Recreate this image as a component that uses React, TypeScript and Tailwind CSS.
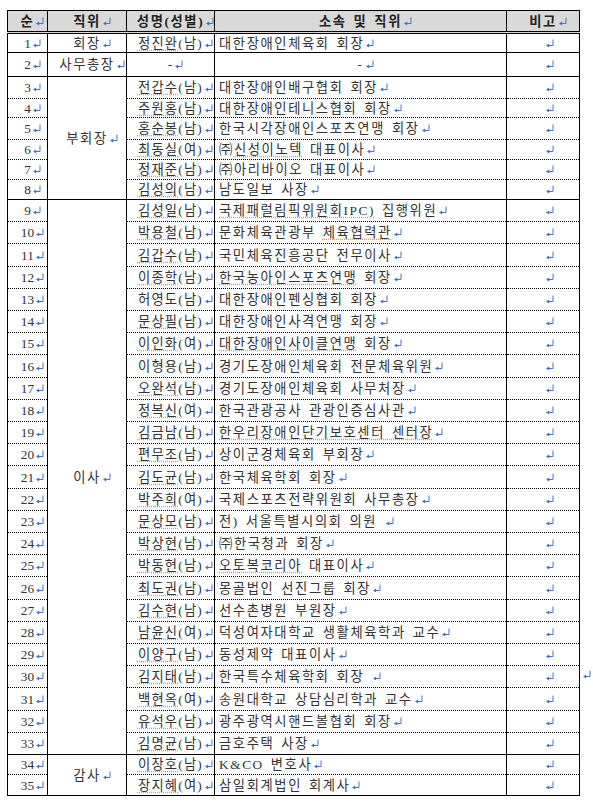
import React from "react";

type Seg = [string, boolean?];

type Row = {
  name: string;
  nu?: boolean; // name underlined by spell check
  org: Seg[];
  h: string;
};

const rows: Row[] = [
  { name: "정진완(남)", org: [["대한장애인체육회 회장"]], h: "h-[20px]" },
  { name: "-", nu: false, org: [["-"]], h: "h-[24px]" },
  { name: "전갑수(남)", org: [["대한장애인배구협회 회장"]], h: "h-[22px]" },
  { name: "주원홍(남)", org: [["대한장애인테니스협회 회장"]], h: "h-[19px]" },
  { name: "홍순봉(남)", org: [["한국시각장애인스포츠연맹 회장"]], h: "h-[22px]" },
  { name: "최동실(여)", org: [["㈜"], ["신성이노텍", true], [" 대표이사"]], h: "h-[20px]" },
  { name: "정재준(남)", org: [["㈜아리바이오 대표이사"]], h: "h-[20px]" },
  { name: "김성의(남)", org: [["남도일보 사장"]], h: "h-[20px]" },
  { name: "김성일(남)", org: [["국제패럴림픽위원회IPC)", true], [" 집행위원"]], h: "h-[22px]" },
  { name: "박용철(남)", org: [["문화체육관광부 "], ["체육협력관", true]], h: "h-[22px]" },
  { name: "김갑수(남)", org: [["국민체육진흥공단 전무이사"]], h: "h-[23px]" },
  { name: "이종학(남)", org: [["한국농아인스포츠연맹", true], [" 회장"]], h: "h-[22px]" },
  { name: "허영도(남)", nu: false, org: [["대한장애인펜싱협회 회장"]], h: "h-[22px]" },
  { name: "문상필(남)", org: [["대한장애인사격연맹 회장"]], h: "h-[22px]" },
  { name: "이인화(여)", org: [["대한장애인사이클연맹", true], [" 회장"]], h: "h-[22px]" },
  { name: "이형용(남)", nu: false, org: [["경기도장애인체육회 전문체육위원"]], h: "h-[23px]" },
  { name: "오완석(남)", org: [["경기도장애인체육회 사무처장"]], h: "h-[22px]" },
  { name: "정복신(여)", org: [["한국관광공사 관광인증심사관"]], h: "h-[22px]" },
  { name: "김금남(남)", org: [["한우리장애인단기보호센터 센터장", true]], h: "h-[22px]" },
  { name: "편무조(남)", org: [["상이군경체육회 부회장"]], h: "h-[22px]" },
  { name: "김도균(남)", org: [["한국체육학회 회장"]], h: "h-[23px]" },
  { name: "박주희(여)", org: [["국제스포츠전략위원회 사무총장"]], h: "h-[22px]" },
  { name: "문상모(남)", org: [["전) 서울특별시의회 의원 "]], h: "h-[22px]" },
  { name: "박상현(남)", org: [["㈜한국청과 회장"]], h: "h-[22px]" },
  { name: "박동현(남)", org: [["오토복코리아", true], [" 대표이사"]], h: "h-[22px]" },
  { name: "최도권(남)", org: [["몽골법인 선진그룹 회장"]], h: "h-[23px]" },
  { name: "김수현(남)", org: [["선수촌병원 부원장"]], h: "h-[22px]" },
  { name: "남윤신(여)", org: [["덕성여자대학교 생활체육학과 교수"]], h: "h-[22px]" },
  { name: "이양구(남)", org: [["동성제약 대표이사"]], h: "h-[22px]" },
  { name: "김지태(남)", org: [["한국특수체육학회 회장 "]], h: "h-[22px]" },
  { name: "백현옥(여)", org: [["송원대학교 상담심리학과 교수"]], h: "h-[23px]" },
  { name: "유석우(남)", org: [["광주광역시핸드볼협회 회장"]], h: "h-[22px]" },
  { name: "김명균(남)", org: [["금호주택 사장"]], h: "h-[22px]" },
  { name: "이장호(남)", org: [["K&CO 변호사"]], h: "h-[20px]" },
  { name: "장지혜(여)", org: [["삼일회계법인 회계사"]], h: "h-[21px]" },
];

const groups = [
  { label: "회장", span: 1 },
  { label: "사무총장", span: 1 },
  { label: "부회장", span: 6 },
  { label: "이사", span: 25 },
  { label: "감사", span: 2 },
];

// paragraph mark as shown by the word processor, takes no width
function Mark({ className = "" }: { className?: string }) {
  return (
    <svg
      width="8"
      height="9"
      viewBox="0 0 8 9"
      className={`inline-block ml-[2px] -mr-[10px] align-baseline ${className}`}
    >
      <path d="M7 0.5V6.5H2.5" fill="none" stroke="#4a72c2" strokeWidth="1" />
      <path d="M0 6.5L3.2 4.4V8.6Z" fill="#4a72c2" />
    </svg>
  );
}

const squiggle = "underline decoration-dotted decoration-[#e0a040] underline-offset-[2px]";

export default function App() {
  // map each row to its group start / end
  const starts = new Map<number, { label: string; span: number }>();
  const ends = new Set<number>();
  let i = 0;
  groups.forEach((g) => {
    starts.set(i, g);
    ends.add(i + g.span - 1);
    i += g.span;
  });

  return (
    <div className="relative h-[802px] w-[593px] overflow-hidden bg-white pl-[7px] pt-[10px] font-['Liberation_Serif','Noto_Sans_CJK_KR',serif] text-[13.3px] leading-[15px] tracking-[1.6px] text-[#333] [word-spacing:2px]">
      <table className="w-[572px] table-fixed border-collapse border border-black">
        <colgroup>
          <col className="w-[40px]" />
          <col className="w-[79px]" />
          <col className="w-[88px]" />
          <col className="w-[292px]" />
          <col className="w-[73px]" />
        </colgroup>
        <thead>
          <tr className="h-[22px] bg-[#d9d9d9] font-bold text-[#222]">
            {["순", "직위", "성명(성별)", "소속 및 직위", "비고"].map((t) => (
              <th
                key={t}
                className="border-x border-b-[3px] border-black p-0 text-center font-bold [border-bottom-style:double]"
              >
                {t}
                <Mark />
              </th>
            ))}
          </tr>
        </thead>
        <tbody>
          {rows.map((r, idx) => {
            const bottom = ends.has(idx) ? "border-b" : "border-b [border-bottom-style:dotted]";
            const g = starts.get(idx);
            const plain = r.name === "-";
            return (
              <tr key={idx} className={r.h}>
                <td className={`border-x border-black p-0 text-center tracking-normal ${bottom}`}>
                  {idx + 1}
                  <Mark />
                </td>
                {g && (
                  <td
                    rowSpan={g.span}
                    className="border-x border-b border-black p-0 text-center"
                  >
                    {g.label}
                    <Mark />
                  </td>
                )}
                <td className={`border-x border-black p-0 text-center tracking-[1.2px] ${bottom}`}>
                  {plain ? (
                    r.name
                  ) : (
                    <>
                      <span className={r.nu === false ? "" : squiggle}>{r.name.slice(0, 3)}</span>
                      {r.name.slice(3)}
                    </>
                  )}
                  <Mark />
                </td>
                <td
                  className={`border-x border-black p-0 ${plain ? "text-center" : "pl-[4px] text-left"} ${bottom}`}
                >
                  <span className="whitespace-pre">
                    {r.org.map(([t, u], k) => (
                      <span key={k} className={u ? squiggle : ""}>
                        {t}
                      </span>
                    ))}
                  </span>
                  <Mark />
                </td>
                <td className={`border-x border-black p-0 text-center ${bottom}`}>
                  <Mark className="ml-[4px]" />
                </td>
              </tr>
            );
          })}
        </tbody>
      </table>
      {/* stray paragraph mark beside row 30 */}
      <div className="absolute left-[583px] top-[670px]">
        <svg width="8" height="9" viewBox="0 0 8 9">
          <path d="M7 0.5V6.5H2.5" fill="none" stroke="#4a72c2" strokeWidth="1" />
          <path d="M0 6.5L3.2 4.4V8.6Z" fill="#4a72c2" />
        </svg>
      </div>
    </div>
  );
}
